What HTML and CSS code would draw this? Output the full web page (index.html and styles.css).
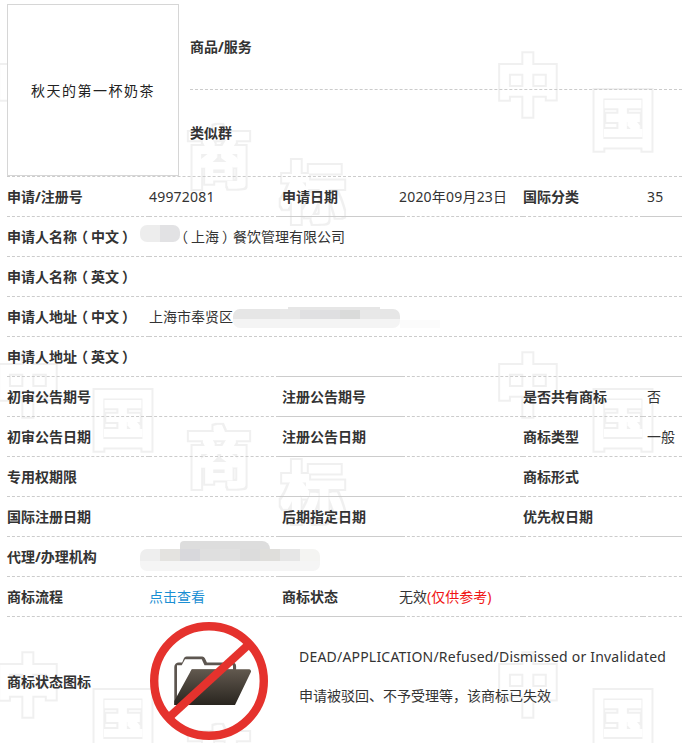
FILE: index.html
```html
<!DOCTYPE html>
<html lang="zh-CN">
<head>
<meta charset="utf-8">
<title>商标详情</title>
<link rel="stylesheet" href="styles.css">
</head>
<body>
<div class="page">
  <svg class="watermark" width="682" height="743" aria-hidden="true">
    <defs>
      <pattern id="wm-tile" patternUnits="userSpaceOnUse" width="500" height="300" patternTransform="translate(-4 0)">
        <text class="wm-glyph" x="0" y="109">中</text>
        <text class="wm-glyph" x="95" y="143">国</text>
        <text class="wm-glyph" x="191" y="181">商</text>
        <text class="wm-glyph" x="285" y="216">标</text>
      </pattern>
      <filter id="wm-outline" x="0" y="0" width="100%" height="100%" color-interpolation-filters="sRGB">
        <feMorphology in="SourceAlpha" operator="dilate" radius="4" result="outer"/>
        <feMorphology in="SourceAlpha" operator="dilate" radius="2" result="inner"/>
        <feComposite in="outer" in2="inner" operator="out" result="ring"/>
        <feFlood flood-color="#f0f0f0"/>
        <feComposite in2="ring" operator="in"/>
      </filter>
    </defs>
    <rect width="682" height="743" fill="url(#wm-tile)" filter="url(#wm-outline)"/>
  </svg>

  <div class="sheet">
    <section class="hero">
      <div class="mark-box">秋天的第一杯奶茶</div>
      <div class="hero-info">
        <div class="hero-row hero-row-top"><span class="label">商品/服务</span></div>
        <div class="hero-row"><span class="label">类似群</span></div>
      </div>
    </section>

    <div class="row">
      <div class="cell label">申请/注册号</div>
      <div class="cell num">49972081</div>
      <div class="cell c3 solid label">申请日期</div>
      <div class="cell c4 num">2020年09月23日</div>
      <div class="cell label">国际分类</div>
      <div class="cell c6 solid num">35</div>
    </div>

    <div class="row row-wide">
      <div class="cell label">申请人名称<span class="paren">（</span>中文<span class="paren">）</span></div>
      <div class="cell blob-cell"><span class="blob blob-name"></span><span class="paren">（</span>上海<span class="paren">）</span>餐饮管理有限公司</div>
    </div>
    <div class="row row-wide">
      <div class="cell label">申请人名称<span class="paren">（</span>英文<span class="paren">）</span></div>
      <div class="cell"></div>
    </div>
    <div class="row row-wide">
      <div class="cell label">申请人地址<span class="paren">（</span>中文<span class="paren">）</span></div>
      <div class="cell blob-cell">上海市奉贤区<span class="blob blob-addr"></span></div>
    </div>

    <div class="row">
      <div class="cell label">申请人地址<span class="paren">（</span>英文<span class="paren">）</span></div>
      <div class="cell"></div>
      <div class="cell c3 solid"></div>
      <div class="cell c4"></div>
      <div class="cell"></div>
      <div class="cell c6 solid"></div>
    </div>

    <div class="row">
      <div class="cell label">初审公告期号</div>
      <div class="cell"></div>
      <div class="cell c3 solid label">注册公告期号</div>
      <div class="cell c4"></div>
      <div class="cell label">是否共有商标</div>
      <div class="cell c6">否</div>
    </div>
    <div class="row">
      <div class="cell label">初审公告日期</div>
      <div class="cell"></div>
      <div class="cell c3 solid label">注册公告日期</div>
      <div class="cell c4"></div>
      <div class="cell label">商标类型</div>
      <div class="cell c6">一般</div>
    </div>
    <div class="row">
      <div class="cell label">专用权期限</div>
      <div class="cell"></div>
      <div class="cell c3 solid"></div>
      <div class="cell c4"></div>
      <div class="cell label">商标形式</div>
      <div class="cell c6"></div>
    </div>
    <div class="row">
      <div class="cell label">国际注册日期</div>
      <div class="cell"></div>
      <div class="cell c3 solid label">后期指定日期</div>
      <div class="cell c4"></div>
      <div class="cell label">优先权日期</div>
      <div class="cell c6 solid"></div>
    </div>
    <div class="row">
      <div class="cell label">代理/办理机构</div>
      <div class="cell blob-cell"><span class="blob blob-agent"></span></div>
      <div class="cell c3 solid"></div>
      <div class="cell c4"></div>
      <div class="cell"></div>
      <div class="cell c6"></div>
    </div>
    <div class="row">
      <div class="cell label">商标流程</div>
      <div class="cell"><a class="link" href="#">点击查看</a></div>
      <div class="cell c3 solid label">商标状态</div>
      <div class="cell c4">无效<span class="note">(仅供参考)</span></div>
      <div class="cell"></div>
      <div class="cell c6"></div>
    </div>

    <section class="status">
      <div class="status-label label">商标状态图标</div>
      <svg class="status-icon" width="118" height="118" viewBox="0 0 118 118" role="img" aria-label="已失效">
        <defs>
          <linearGradient id="folder-fill" x1="0" y1="0" x2="0" y2="1">
            <stop offset="0" stop-color="#62594f"/>
            <stop offset="1" stop-color="#29251f"/>
          </linearGradient>
        </defs>
        <path fill="#5d5650" d="M24.3 83V45a4.5 4.500 0 0 1 4.500-4.500h3.400l1.600-4a3 3 0 0 1 2.800-1.900h15.600a3 3 0 0 1 2.700 1.700l2 4.200h25.400a3.800 3.800 0 0 1 3.800 3.800V50H27v33z"/>
        <path fill="#ffffff" d="M27 43.300h4.700l3.300-6h16.700l2.800 6H83v4.200H42L27 72z"/>
        <path fill="url(#folder-fill)" d="M41.700 47.300H99a2 2 0 0 1 1.900 2.800L85 83H24.300V79z"/>
        <circle cx="59" cy="59" r="54.800" fill="none" stroke="#e5322d" stroke-width="8.400"/>
        <line x1="20" y1="94.500" x2="97" y2="24" stroke="#e5322d" stroke-width="8.400"/>
      </svg>
      <div class="status-text">
        <p class="status-line status-en">DEAD/APPLICATION/Refused/Dismissed or Invalidated</p>
        <p class="status-line">申请被驳回、不予受理等，该商标已失效</p>
      </div>
    </section>
  </div>
</div>
</body>
</html>
```
FILE: styles.css
```css
* { box-sizing: border-box; }

html, body {
  margin: 0;
  padding: 0;
  background: #fff;
}

body {
  font-family: "Noto Sans", "Noto Sans CJK SC", sans-serif;
  font-size: 14px;
  color: #333;
}

.page {
  position: relative;
  width: 682px;
  height: 743px;
  overflow: hidden;
}

.watermark {
  position: absolute;
  left: 0;
  top: 0;
}

.wm-glyph {
  font-family: "Noto Sans CJK SC", sans-serif;
  font-size: 64px;
  font-weight: 400;
  fill: #000;
}

.sheet {
  position: relative;
  padding-left: 7px;
}

.label {
  font-weight: 700;
}

.num {
  letter-spacing: 0.2px;
}

/* fullwidth brackets sit centred in their box in the original face */
.paren {
  display: inline-block;
  width: 14px;
  text-align: center;
  font-feature-settings: "palt";
}

/* top block */
.hero {
  display: flex;
  height: 177px;
  padding-top: 4px;
  border-bottom: 1px dashed #ccc;
}

.mark-box {
  display: flex;
  align-items: center;
  justify-content: center;
  flex: none;
  width: 172px;
  height: 172px;
  margin-bottom: -1px;
  border: 1px solid #d6d6d6;
  background: #fff;
  font-size: 14px;
  letter-spacing: 1.5px;
  color: #222;
}

.hero-info {
  flex: 1;
  margin-left: 11px;
  margin-top: -4px;
}

.hero-row {
  display: flex;
  align-items: center;
  height: 83px;
}

.hero-row-top {
  height: 90px;
  padding-top: 2px;
  border-bottom: 1px dashed #ccc;
}

/* table rows */
.row {
  display: grid;
  grid-template-columns: 142px 130px 123px 121px 120px 39px;
  height: 40px;
}

.row-wide {
  grid-template-columns: 142px 533px;
}

.cell {
  height: 40px;
  line-height: 39px;
  white-space: nowrap;
  border-bottom: 1px dashed #ccc;
}

.cell.solid {
  border-bottom-style: solid;
}

.c3 {
  padding-left: 3px;
}

.c4 {
  text-indent: -3px;
}

.c6 {
  padding-left: 4px;
}

.link {
  color: #1b8fd3;
  text-decoration: none;
}

.note {
  color: #f01414;
}

/* blurred-out data */
.blob-cell {
  display: flex;
  align-items: center;
}

.blob {
  position: relative;
  display: block;
  flex: none;
  border-radius: 7px;
  filter: blur(0.6px);
}

.blob-name {
  width: 40px;
  height: 17px;
  margin: 0 -3px 7px -9px;
  background: linear-gradient(90deg, #ededed 50%, #e2e2e4 50%);
}

.blob-addr {
  width: 167px;
  height: 19px;
  margin-top: 4px;
  background:
    linear-gradient(90deg,
      #e6e6e6 0 27px, #e6e6e6 27px 47px, #e8e8e8 47px 67px, #e0e0e2 67px 87px, #dfdfe1 87px 107px,
      #dadbda 107px 127px, #e8e8e8 127px 147px, #e6e6e6 147px) top / 100% 10px no-repeat,
    #f4f4f4;
}

.blob-addr::before {
  content: "";
  position: absolute;
  left: 55px;
  top: -2px;
  width: 92px;
  height: 3px;
  background: #e6e6e6;
}

.blob-addr::after {
  content: "";
  position: absolute;
  left: 167px;
  top: 11px;
  width: 40px;
  height: 8px;
  background: #fbfbfb;
}

.blob-agent {
  width: 180px;
  height: 22px;
  margin: 6px 0 0 -9px;
  background:
    linear-gradient(90deg,
      #eeeeee 0 20px, #e4e3e0 20px 40px, #d8d8dc 40px 60px, #dfdfdf 60px 80px,
      #e0e0e0 80px 100px, #dcdcdc 100px 120px, #dfdedb 120px 140px,
      #e6e6e6 140px 160px, #f4f4f2 160px) top / 100% 12px no-repeat,
    #f5f5f5;
}

.blob-agent::before {
  content: "";
  position: absolute;
  left: 40px;
  top: -8px;
  width: 90px;
  height: 8px;
  border-radius: 4px 8px 0 0;
  background: #dddddd;
}

/* last block */
.status {
  display: flex;
  align-items: flex-start;
}

.status-label {
  flex: none;
  width: 143px;
  margin-top: 54px;
  line-height: 22px;
}

.status-icon {
  flex: none;
  margin-top: 5px;
}

.status-text {
  margin: 20px 0 0 31px;
}

.status-line {
  margin: 0;
  line-height: 39px;
  white-space: nowrap;
}

.status-en {
  letter-spacing: 0.2px;
}
```
